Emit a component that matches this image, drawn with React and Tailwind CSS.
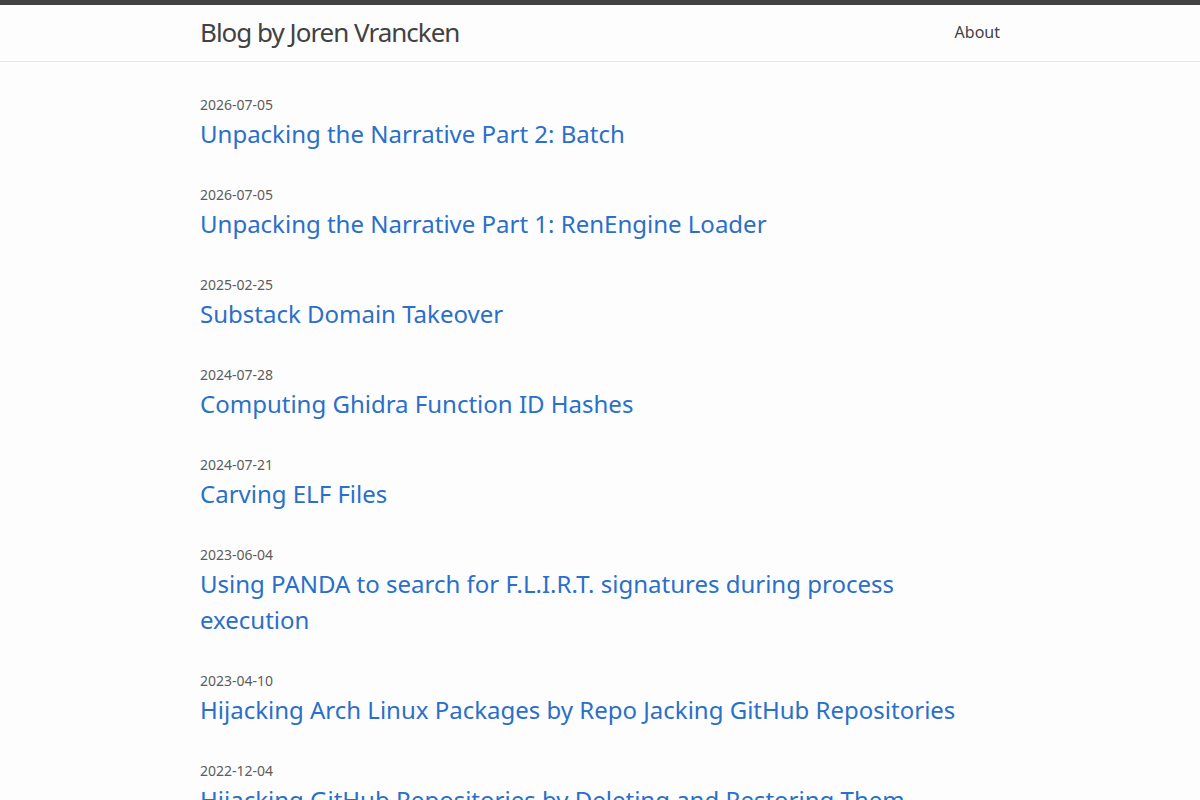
import React from 'react';

const posts = [
  { date: '2026-07-05', title: 'Unpacking the Narrative Part 2: Batch' },
  { date: '2026-07-05', title: 'Unpacking the Narrative Part 1: RenEngine Loader' },
  { date: '2025-02-25', title: 'Substack Domain Takeover' },
  { date: '2024-07-28', title: 'Computing Ghidra Function ID Hashes' },
  { date: '2024-07-21', title: 'Carving ELF Files' },
  { date: '2023-06-04', title: 'Using PANDA to search for F.L.I.R.T. signatures during process execution' },
  { date: '2023-04-10', title: 'Hijacking Arch Linux Packages by Repo Jacking GitHub Repositories' },
  { date: '2022-12-04', title: 'Hijacking GitHub Repositories by Deleting and Restoring Them' },
];

export default function App() {
  return (
    <div className="min-h-screen bg-[#fdfdfd] text-[#111] font-['Noto_Sans',sans-serif]">
      <header className="border-t-[5px] border-t-[#424242] border-b border-b-[#e8e8e8]">
        <div className="max-w-[860px] mx-auto px-[30px] flex justify-between items-center h-[56px]">
          <a href="#" className="text-[26px] leading-[54px] text-[#424242] tracking-[-1px] -mt-0.5">
            Blog by Joren Vrancken
          </a>
          <nav>
            <a href="#" className="text-base leading-[54px] text-[#424242] -mt-0.5 block">About</a>
          </nav>
        </div>
      </header>

      <main className="max-w-[860px] mx-auto px-[30px] pt-[30px]">
        <ul className="flex flex-col gap-[30px]">
          {posts.map((p, i) => (
            <li key={i}>
              <span className="block text-sm leading-6 pt-px -mb-px text-[#5c5c5c]">{p.date}</span>
              <h3>
                <a href="#" className="block text-2xl leading-9 text-[#2a6fc9]">{p.title}</a>
              </h3>
            </li>
          ))}
        </ul>
      </main>
    </div>
  );
}
